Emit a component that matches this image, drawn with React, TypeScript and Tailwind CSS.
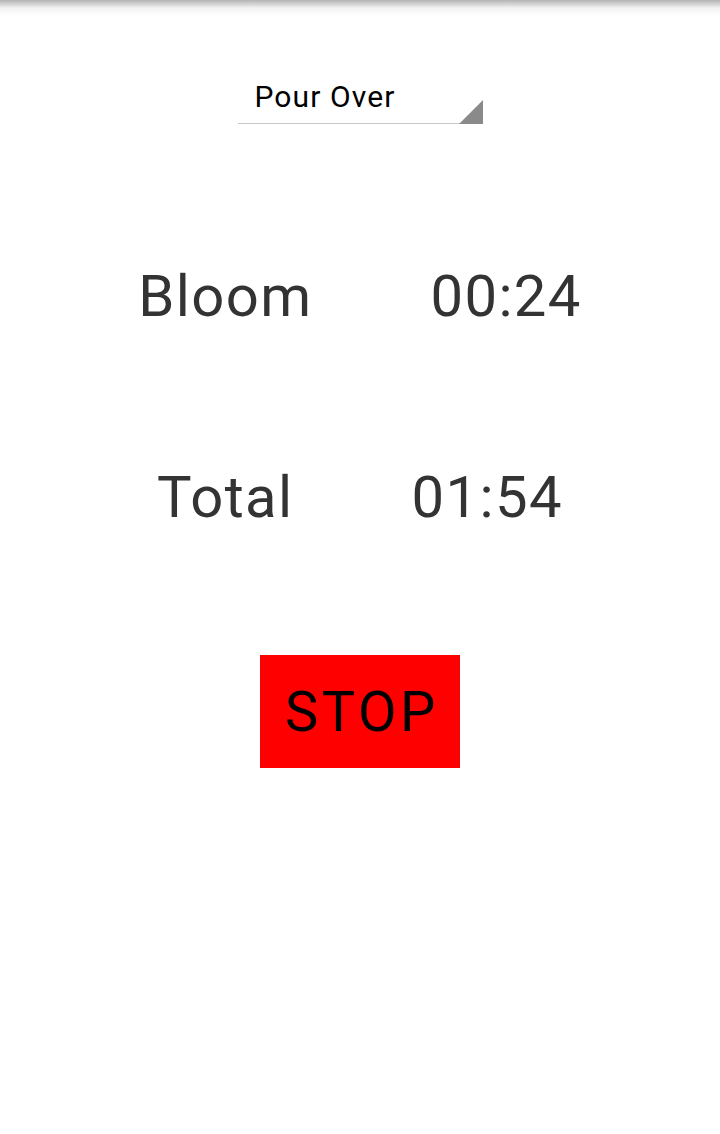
import React from "react";

export default function App() {
  const font = { fontFamily: "Roboto, 'Noto Sans', sans-serif" };
  return (
    <div className="min-h-[1134px] w-full bg-white flex flex-col items-center" style={font}>
      <div className="h-4 w-full bg-gradient-to-b from-[#b4b4b4] via-[#f2f2f2] to-white" />
      <div className="relative mt-[66px] w-[245px] border-b border-[#c8c8c8] pb-[11px] pl-[17px]">
        <div className="text-[30px] leading-none tracking-[1.1px] text-black">Pour Over</div>
        <svg className="absolute right-0 bottom-[-1px]" width="24" height="24" viewBox="0 0 24 24">
          <polygon points="24,0 24,24 0,24" fill="#8a8a8a" />
        </svg>
      </div>
      <div className="mt-[143px] flex justify-center gap-[118px] text-[58px] leading-none tracking-[1.4px] text-[#333333]">
        <span>Bloom</span>
        <span>00:24</span>
      </div>
      <div className="mt-[143px] flex justify-center gap-[118px] text-[58px] leading-none tracking-[1.4px] text-[#333333]">
        <span>Total</span>
        <span>01:54</span>
      </div>
      <button className="mt-[129px] flex h-[113px] w-[200px] items-center justify-center bg-[#ff0000] pl-[4px] text-[56px] leading-none tracking-[3.5px] text-black">
        STOP
      </button>
    </div>
  );
}
